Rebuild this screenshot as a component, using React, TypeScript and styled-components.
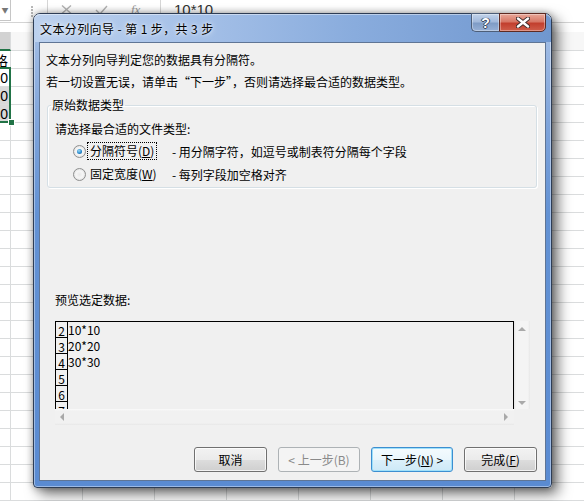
import React from 'react';
import styled, { createGlobalStyle, css } from 'styled-components';

const UI_FONT = `"Noto Sans CJK SC", "Noto Sans", sans-serif`;

const GlobalStyle = createGlobalStyle`
  html, body {
    margin: 0;
    padding: 0;
    background: #fff;
  }
  body {
    width: 584px;
    height: 501px;
    overflow: hidden;
    font-family: ${UI_FONT};
    font-size: 12px;
    color: #000;
  }
`;

const Screen = styled.div`
  position: relative;
  width: 584px;
  height: 501px;
  overflow: hidden;
  background: #fff;
`;

/* ---------- excel sheet behind the dialog ---------- */

const Sheet = styled.div`
  display: flex;
  flex-direction: column;
`;

const FormulaBar = styled.div`
  display: flex;
  align-items: stretch;
  height: 23px;
  box-sizing: border-box;
  border-bottom: 1px solid #d4d4d4;
`;

const NameBox = styled.div`
  flex: none;
  width: 11px;
  height: 21px;
  box-sizing: border-box;
  border-right: 1px solid #c6c6c6;
  border-bottom: 1px solid #c6c6c6;
  display: flex;
  align-items: center;
  justify-content: center;
  color: #777;
  font-size: 7px;
`;

const Grip = styled.div`
  flex: none;
  width: 2px;
  margin: 6px 14px 0 20px;
  height: 11px;
  background: repeating-linear-gradient(to bottom, #b8b8b8 0 2px, transparent 2px 3px);
`;

const BarSep = styled.div`
  flex: none;
  width: 1px;
  background: #d6d6d6;
`;

const BarIcons = styled.div`
  flex: none;
  width: 112px;
  display: flex;
  align-items: flex-start;
  padding: 5px 0 0 13px;
  gap: 23px;
  box-sizing: border-box;
  color: #b5b5b5;
`;

const FxText = styled.span`
  font: italic 13px "Liberation Serif", serif;
  line-height: 10px;
  color: #9a9a9a;
`;

const FormulaText = styled.div`
  padding: 1px 0 0 13px;
  font: 15px "Liberation Sans", sans-serif;
  color: #333;
`;

const BarGap = styled.div`
  height: 9px;
`;

const GridRow = styled.div<{ $h: number }>`
  display: flex;
  height: ${p => p.$h}px;
`;

const Cell = styled.div<{ $w: number; $shade?: boolean; $head?: boolean; $selHead?: boolean }>`
  flex: none;
  width: ${p => p.$w}px;
  box-sizing: border-box;
  padding-right: 2px;
  border-right: 1px solid #dadcdd;
  border-bottom: 1px solid #dadcdd;
  background: ${p => (p.$shade ? '#d9d9d9' : p.$head ? '#f7f7f7' : '#fff')};
  display: flex;
  align-items: center;
  justify-content: flex-end;
  overflow: hidden;
  white-space: nowrap;
  font: 14px "Liberation Sans", "Noto Sans CJK SC", sans-serif;
  color: #000;
  ${p =>
    p.$selHead &&
    css`
      background: #d2d2d2;
      border-bottom: 2px solid #217346;
    `}
`;

const Selection = styled.div`
  position: absolute;
  left: -3px;
  top: 67px;
  width: 14px;
  height: 56px;
  box-sizing: border-box;
  border: 2px solid #217346;
`;

const FillHandle = styled.div`
  position: absolute;
  left: 8px;
  top: 119px;
  width: 7px;
  height: 7px;
  box-sizing: border-box;
  background: #217346;
  border: 1px solid #fff;
`;

/* ---------- dialog window ---------- */

const Dialog = styled.div`
  position: absolute;
  left: 33px;
  top: 13px;
  width: 519px;
  height: 475px;
  box-sizing: border-box;
  display: flex;
  flex-direction: column;
  padding: 0 5px 6px;
  border: 1px solid #2e3d55;
  border-radius: 7px 7px 4px 4px;
  background: linear-gradient(to bottom, #a9c2e6 0px, #9ab7e2 40px, #7fa4da 110px, #6392d4 200px, #5a8bd2 100%);
  box-shadow: inset 0 0 0 1px rgba(255, 255, 255, 0.4), 6px 6px 14px rgba(0, 0, 0, 0.55),
    0 0 7px rgba(0, 0, 0, 0.35);
`;

const TitleBar = styled.div`
  height: 28px;
  display: flex;
  align-items: center;
  margin: 0 -5px;
  padding: 0 0 0 6px;
  background: linear-gradient(to right, #bcd1ee 0%, #a6c1e8 30%, #89acdd 62%, #7097cf 100%);
  box-shadow: inset 0 1px 0 rgba(255, 255, 255, 0.45);
  border-radius: 6px 6px 0 0;
`;

const TitleText = styled.div`
  flex: 1;
  font-size: 12px;
  letter-spacing: 0.4px;
  color: #000;
  text-shadow: 0 0 6px rgba(255, 255, 255, 0.9), 0 0 3px rgba(255, 255, 255, 0.8);
`;

const CaptionButtons = styled.div`
  align-self: flex-start;
  display: flex;
  margin: -1px 5px 0 0;
`;

const CaptionButton = styled.div<{ $close?: boolean }>`
  height: 19px;
  box-sizing: border-box;
  display: flex;
  align-items: center;
  justify-content: center;
  border: 1px solid #4d5e78;
  ${p =>
    p.$close
      ? css`
          width: 47px;
          border-color: #5e2a22;
          border-radius: 0 0 5px 0;
          background: linear-gradient(to bottom, #e9a899 0%, #d77766 45%, #c23f2e 55%, #cf5e4b 100%);
        `
      : css`
          width: 28px;
          border-right: none;
          border-radius: 0 0 0 5px;
          background: linear-gradient(to bottom, #c2d3ea 0%, #a2b9db 45%, #7f9cc6 55%, #97b0d6 100%);
        `}
  box-shadow: inset 0 0 0 1px rgba(255, 255, 255, 0.35);
`;

const HelpGlyph = styled.span`
  font: bold 14px "Liberation Sans", sans-serif;
  color: #fff;
  text-shadow: 0 0 1px #2b3a52, 1px 0 0 #3b4a62, -1px 0 0 #3b4a62, 0 1px 0 #3b4a62;
`;

const Client = styled.div`
  flex: 1;
  display: flex;
  flex-direction: column;
  background: #f0f0f0;
  border: 1px solid #5f7595;
  padding-bottom: 8px;
`;

const Intro = styled.div`
  padding-left: 6px;
  line-height: 18px;
  margin-top: 4px;
  &:first-child {
    margin-top: 8px;
  }
`;

const GroupBox = styled.fieldset`
  margin: 7px 8px 0 7px;
  padding: 8px 4px 3px 3px;
  border: 1px solid #d5dfe5;
  border-radius: 3px;
  box-shadow: inset 1px 1px 0 #fff, 1px 1px 0 #fff;
`;

const GroupLegend = styled.legend`
  padding: 0 1px;
  line-height: 14px;
`;

const Prompt = styled.div`
  margin-left: 4px;
  line-height: 18px;
`;

const OptionRow = styled.div`
  display: flex;
  align-items: center;
  height: 20px;
  padding-left: 22px;
  margin-top: 3px;
  &:first-of-type {
    margin-top: 4px;
  }
`;

const Radio = styled.span<{ $checked?: boolean }>`
  width: 13px;
  height: 13px;
  box-sizing: border-box;
  border-radius: 50%;
  border: 1px solid #8e8f8f;
  background: radial-gradient(circle at 50% 50%, #e9e9e9 0%, #f6f6f6 45%, #d2d2d2 100%);
  display: flex;
  align-items: center;
  justify-content: center;
  &::after {
    content: '';
    width: 5px;
    height: 5px;
    border-radius: 50%;
    background: ${p =>
      p.$checked ? 'radial-gradient(circle at 40% 35%, #9fdcf5 0%, #2a8bcf 55%, #0f4f86 100%)' : 'transparent'};
  }
`;

const OptionLabel = styled.span<{ $focus?: boolean }>`
  width: 84px;
  margin-left: 2px;
  display: flex;
  & > span {
    padding: 0 2px;
    line-height: 16px;
    outline: ${p => (p.$focus ? '1px dotted #000' : 'none')};
  }
`;

const OptionHint = styled.span`
  white-space: nowrap;
`;

const Key = styled.u`
  text-underline-offset: 1px;
`;

const PreviewLabel = styled.div`
  margin: 103px 0 0 15px;
  line-height: 18px;
`;

const Preview = styled.div`
  margin: 12px 0 0 15px;
  width: 475px;
  height: 104px;
  display: grid;
  grid-template-columns: 459px 16px;
  grid-template-rows: 88px 16px;
`;

const PreviewData = styled.div`
  border: 1px solid #000;
  border-bottom: none;
  overflow: hidden;
  font-family: ${UI_FONT};
  font-size: 12px;
`;

const PreviewRow = styled.div`
  display: flex;
  height: 16px;
`;

const RowNum = styled.div`
  width: 12px;
  flex: none;
  box-sizing: border-box;
  border-right: 1px solid #000;
  border-bottom: 1px solid #000;
  display: flex;
  align-items: flex-end;
  justify-content: center;
  line-height: 13px;
`;

const RowText = styled.div`
  line-height: 16px;
`;

const ScrollBar = styled.div<{ $vertical?: boolean }>`
  display: flex;
  flex-direction: ${p => (p.$vertical ? 'column' : 'row')};
  justify-content: space-between;
  align-items: center;
  box-sizing: border-box;
  padding: ${p => (p.$vertical ? '6px 0 4px' : '0 6px 0 5px')};
  background: ${p =>
    p.$vertical
      ? 'linear-gradient(to right, #e4e4e4 0, #f4f4f4 2px, #f4f4f4 14px, #e7e7e7 16px)'
      : 'linear-gradient(to bottom, #fafafa 0, #f1f1f1 2px, #f1f1f1 14px, #e7e7e7 16px)'};
`;

const ScrollCorner = styled.div`
  background: #f0f0f0;
`;

const ButtonRow = styled.div`
  margin-top: auto;
  display: flex;
  justify-content: flex-end;
  gap: 11px;
  padding-right: 8px;
`;

const Button = styled.button<{ $w: number; $default?: boolean }>`
  width: ${p => p.$w}px;
  height: 25px;
  box-sizing: border-box;
  padding: 0;
  font-family: ${UI_FONT};
  font-size: 12px;
  color: #000;
  border: 1px solid #707070;
  border-radius: 3px;
  background: linear-gradient(to bottom, #f2f2f2 0%, #ebebeb 50%, #dddddd 51%, #cfcfcf 100%);
  box-shadow: inset 0 0 0 1px rgba(255, 255, 255, 0.75);
  &:disabled {
    color: #8a8a8a;
    border-color: #adb2b5;
    background: #f4f4f4;
    box-shadow: none;
  }
  ${p =>
    p.$default &&
    css`
      border-color: #3c8ed0;
      background: linear-gradient(to bottom, #f4fbfe 0%, #eaf6fc 50%, #dcf0fa 51%, #cde9f7 100%);
      box-shadow: inset 0 0 0 1px #9ee0fa;
    `}
`;

const Arrow = ({ dir }: { dir: 'up' | 'down' | 'left' | 'right' }) => {
  const pts = {
    up: '0,4 4,0 8,4',
    down: '0,0 8,0 4,4',
    left: '4,0 4,8 0,4',
    right: '0,0 0,8 4,4',
  }[dir];
  const vertical = dir === 'up' || dir === 'down';
  return (
    <svg width={vertical ? 8 : 4} height={vertical ? 4 : 8} viewBox={vertical ? '0 0 8 4' : '0 0 4 8'}>
      <polygon points={pts} fill="#a9a9a9" />
    </svg>
  );
};

const CloseGlyph = () => (
  <svg width="14" height="11" viewBox="0 0 14 11">
    <path d="M2 1.5 L12 9.5 M12 1.5 L2 9.5" stroke="#3a2a2a" strokeWidth="4.2" strokeLinecap="round" />
    <path d="M2 1.5 L12 9.5 M12 1.5 L2 9.5" stroke="#fff" strokeWidth="2.4" strokeLinecap="round" />
  </svg>
);

const CrossIcon = () => (
  <svg width="11" height="9" viewBox="0 0 11 9">
    <path d="M1 0.5 L10 8.5 M10 0.5 L1 8.5" stroke="#b3b3b3" strokeWidth="1.4" />
  </svg>
);

const CheckIcon = () => (
  <svg width="13" height="10" viewBox="0 0 13 10">
    <path d="M1 5 L5 9 L12 1" stroke="#b3b3b3" strokeWidth="1.4" fill="none" />
  </svg>
);

const COLS = 8;
const ROWS = 25;

const cellText = (row: number) => {
  if (row === 0) return '规格';
  if (row >= 1 && row <= 3) return `${row}0`;
  return '';
};

const previewRows = [
  { n: '2', text: '10*10' },
  { n: '3', text: '20*20' },
  { n: '4', text: '30*30' },
  { n: '5', text: '' },
  { n: '6', text: '' },
  { n: '7', text: '' },
];

const App: React.FC = () => {
  return (
    <Screen>
      <GlobalStyle />
      <Sheet>
        <FormulaBar>
          <NameBox>▼</NameBox>
          <Grip />
          <BarSep />
          <BarIcons>
            <CrossIcon />
            <CheckIcon />
            <FxText>fx</FxText>
          </BarIcons>
          <BarSep />
          <FormulaText>10*10</FormulaText>
        </FormulaBar>
        <BarGap />
        <GridRow $h={19}>
          <Cell $w={11} $head $selHead />
          {Array.from({ length: COLS }).map((_, i) => (
            <Cell key={i} $w={72} $head />
          ))}
        </GridRow>
        {Array.from({ length: ROWS }).map((_, r) => (
          <GridRow key={r} $h={18}>
            <Cell $w={11} $shade={r === 2 || r === 3}>
              {cellText(r)}
            </Cell>
            {Array.from({ length: COLS }).map((_, i) => (
              <Cell key={i} $w={72} />
            ))}
          </GridRow>
        ))}
      </Sheet>
      <Selection />
      <FillHandle />

      <Dialog>
        <TitleBar>
          <TitleText>文本分列向导 - 第 1 步，共 3 步</TitleText>
          <CaptionButtons>
            <CaptionButton>
              <HelpGlyph>?</HelpGlyph>
            </CaptionButton>
            <CaptionButton $close>
              <CloseGlyph />
            </CaptionButton>
          </CaptionButtons>
        </TitleBar>

        <Client>
          <Intro>文本分列向导判定您的数据具有分隔符。</Intro>
          <Intro>若一切设置无误，请单击“下一步”，否则请选择最合适的数据类型。</Intro>

          <GroupBox>
            <GroupLegend>原始数据类型</GroupLegend>
            <Prompt>请选择最合适的文件类型:</Prompt>
            <OptionRow>
              <Radio $checked />
              <OptionLabel $focus>
                <span>
                  分隔符号(<Key>D</Key>)
                </span>
              </OptionLabel>
              <OptionHint>- 用分隔字符，如逗号或制表符分隔每个字段</OptionHint>
            </OptionRow>
            <OptionRow>
              <Radio />
              <OptionLabel>
                <span>
                  固定宽度(<Key>W</Key>)
                </span>
              </OptionLabel>
              <OptionHint>- 每列字段加空格对齐</OptionHint>
            </OptionRow>
          </GroupBox>

          <PreviewLabel>预览选定数据:</PreviewLabel>
          <Preview>
            <PreviewData>
              {previewRows.map(row => (
                <PreviewRow key={row.n}>
                  <RowNum>{row.n}</RowNum>
                  <RowText>{row.text}</RowText>
                </PreviewRow>
              ))}
            </PreviewData>
            <ScrollBar $vertical>
              <Arrow dir="up" />
              <Arrow dir="down" />
            </ScrollBar>
            <ScrollBar>
              <Arrow dir="left" />
              <Arrow dir="right" />
            </ScrollBar>
            <ScrollCorner />
          </Preview>

          <ButtonRow>
            <Button $w={73}>取消</Button>
            <Button $w={82} disabled>
              &lt; 上一步(B)
            </Button>
            <Button $w={82} $default>
              下一步(<Key>N</Key>) &gt;
            </Button>
            <Button $w={73}>
              完成(<Key>F</Key>)
            </Button>
          </ButtonRow>
        </Client>
      </Dialog>
    </Screen>
  );
};

export default App;
